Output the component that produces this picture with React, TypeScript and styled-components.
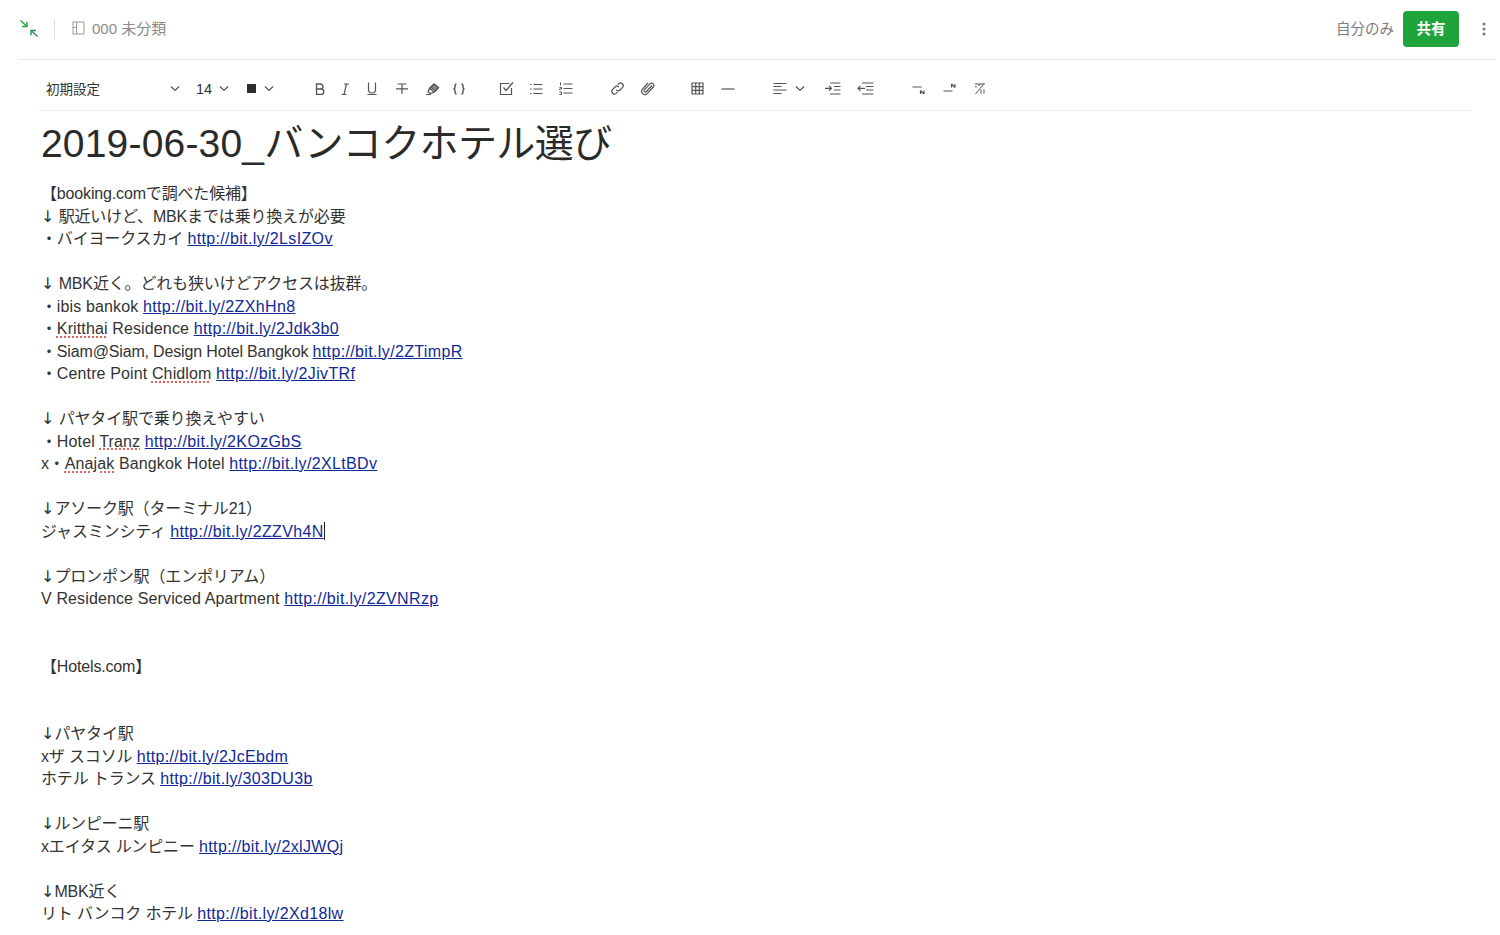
import React from "react";
import styled, { createGlobalStyle } from "styled-components";

const Global = createGlobalStyle`
  html, body { margin: 0; padding: 0; background: #fff; }
  body { font-family: "Liberation Sans", "Noto Sans CJK JP", sans-serif; color: #333; overflow: hidden; }
`;

const Page = styled.div`
  width: 1500px;
  height: 935px;
  overflow: hidden;
  display: flex;
  flex-direction: column;
  padding-left: 18px;
  padding-right: 4px;
  box-sizing: border-box;
`;

const TopBar = styled.header`
  height: 60px;
  flex: none;
  box-sizing: border-box;
  border-bottom: 1px solid #ececec;
  display: flex;
  align-items: center;
  padding: 0 10px 1px 1px;
`;

const Divider = styled.span`
  width: 1px;
  height: 19px;
  background: #dcdcdc;
  margin: 0 17px 0 15px;
`;

const NoteBook = styled.div`
  display: flex;
  align-items: center;
  gap: 7px;
  color: #8a8a8a;
  font-size: 15px;
  margin-bottom: 3px;
`;

const Spacer = styled.div`
  flex: 1;
`;

const Audience = styled.span`
  font-size: 14.5px;
  color: #7c7c7c;
  margin-right: 9px;
  margin-bottom: 3px;
`;

const ShareButton = styled.button`
  width: 56px;
  height: 36px;
  background: #1fa33b;
  color: #fff;
  border: 0;
  border-radius: 4px;
  font: bold 14.5px "Liberation Sans", "Noto Sans CJK JP", sans-serif;
  padding: 0 0 3px;
`;

const More = styled.span`
  margin-left: 23px;
  display: flex;
`;

const ToolbarWrap = styled.div`
  margin: 0 24px 0 21px;
  height: 51px;
  flex: none;
  box-sizing: border-box;
  border-bottom: 1px solid #ececec;
  padding-top: 7px;
  display: flex;
  align-items: center;
`;

const Select = styled.div<{ $w: number }>`
  width: ${(p) => p.$w}px;
  flex: none;
  display: flex;
  align-items: center;
  justify-content: space-between;
  font-size: 13.5px;
  color: #333;
`;

const StyleLabel = styled.span`
  margin-bottom: 1px;
`;

const SizeLabel = styled.span`
  font-size: 14.5px;
`;

const ColorSwatch = styled.span`
  width: 9px;
  height: 9px;
  background: #2e2e2e;
  margin-left: 1px;
`;

const Tool = styled.span<{ $w?: number }>`
  width: ${(p) => p.$w ?? 30}px;
  flex: none;
  display: flex;
  align-items: center;
  justify-content: center;
`;

const Gap = styled.span<{ $w: number }>`
  width: ${(p) => p.$w}px;
  flex: none;
`;

const Editor = styled.main`
  padding: 0 0 0 23px;
`;

const Title = styled.h1`
  margin: 10px 0 16px;
  font-weight: 400;
  font-size: 39px;
  line-height: 46px;
  color: #2a2a2a;
  white-space: nowrap;
  letter-spacing: -0.64px;
`;

const TitleLatin = styled.span`
  letter-spacing: 0.18px;
`;

const Line = styled.div`
  font-size: 16px;
  line-height: 22.5px;
  height: 22.5px;
  color: #333;
  white-space: nowrap;
  letter-spacing: -0.16px;
`;

const Latin = styled.span`
  letter-spacing: 0.13px;
`;

const Arrow = styled.span`
  font-family: "DejaVu Sans", sans-serif;
  letter-spacing: 0;
`;

const Link = styled.a`
  color: #0f2a96;
  text-decoration: underline;
  letter-spacing: 0.36px;
`;

const Misspelt = styled.span`
  text-decoration: underline dotted #e0645c 1.5px;
  text-underline-offset: 2px;
`;

const Caret = styled.span`
  display: inline-block;
  width: 1px;
  height: 18px;
  background: #222;
  vertical-align: -3px;
`;

type SvgProps = { children: React.ReactNode; w?: number; h?: number; sw?: number };
const Svg = ({ children, w = 16, h = 16, sw = 1.2 }: SvgProps) => (
  <svg width={w} height={h} viewBox={`0 0 ${w} ${h}`} fill="none" stroke="#555" strokeWidth={sw}>
    {children}
  </svg>
);

const Chevron = () => (
  <Svg w={10} h={8} sw={1.2}>
    <path d="M1 1.5 5 5.5 9 1.5" />
  </Svg>
);

const ExitIcon = () => (
  <svg width="20" height="20" viewBox="0 0 20 20" fill="none" strokeWidth="1.5">
    <path d="M1.5 1.5 8 7.5M8 2.8V7.5H3" stroke="#27a844" />
    <path d="M18.5 17.5 12 11.5M12 16.2V11.5H17" stroke="#3d8f6c" />
  </svg>
);

const NotebookIcon = () => (
  <Svg w={13} h={14} sw={1}>
    <path d="M1 1h11v12H1zM4.500 1v12M1 6.500h3.500" stroke="#999" />
  </Svg>
);

const Bold = () => (
  <Svg w={12} h={14} sw={1.3}>
    <path d="M2.500 2h4a2.500 2.500 0 0 1 0 5h-4zM2.500 7h4.600a2.700 2.700 0 0 1 0 5.400H2.500z" />
  </Svg>
);
const Italic = () => (
  <Svg w={12} h={14}>
    <path d="M5 2h5M2.500 12.500h5M7.500 2 5 12.500" />
  </Svg>
);
const Underline = () => (
  <Svg w={12} h={15}>
    <path d="M2.500 1.500v7a3.500 3.500 0 0 0 7 0v-7M1.500 13.500h9" />
  </Svg>
);
const Strike = () => (
  <Svg w={14} h={14}>
    <path d="M2.500 2h9M7 2v10M1 6.800h12" />
  </Svg>
);
const Highlight = () => (
  <Svg w={15} h={14}>
    <path d="M1 12.500h5M3 10l1.500-4L9 2l4.500 3.500-4 4.500-4 1.500zM4.500 6l4.500 4" />
    <path d="M9 2l4.500 3.500-3 3.500L6 5.500z" fill="#888" />
  </Svg>
);
const Code = () => (
  <Svg w={14} h={14} sw={1.4}>
    <path d="M4.500 2C3 2 3 3 3 4.500c0 1.500-.5 2.500-1.500 2.500C2.500 7 3 8 3 9.500S3 12 4.500 12M9.500 2C11 2 11 3 11 4.500c0 1.500.5 2.500 1.500 2.500-1 0-1.500 1-1.500 2.500S11 12 9.500 12" />
  </Svg>
);
const Check = () => (
  <Svg w={15} h={15}>
    <path d="M12.500 7v6.500h-11v-11h9" />
    <path d="M4.500 6.500 7 9.500 14 1.500" strokeWidth="1.3" />
  </Svg>
);
const Bullets = () => (
  <Svg w={14} h={12}>
    <path d="M4.500 1.500h9M4.500 6h9M4.500 10.500h9M1 1.500h1.500M1 6h1.500M1 10.500h1.500" />
  </Svg>
);
const Numbers = () => (
  <Svg w={14} h={13}>
    <path d="M4.500 2h9M4.500 6.500h9M4.500 11h9M1.500 .5v3M.5 5.500h2v1.500h-2v1M.5 10h2v2.500h-2" strokeWidth="1" />
  </Svg>
);
const LinkIcon = () => (
  <Svg w={15} h={15}>
    <path d="M6.200 9a2.700 2.700 0 0 0 3.800 0l2.600-2.600a2.700 2.700 0 0 0-3.800-3.800L7.600 3.800" />
    <path d="M8.800 6a2.700 2.700 0 0 0-3.800 0L2.400 8.600a2.700 2.700 0 0 0 3.800 3.800l1.200-1.200" />
  </Svg>
);
const Clip = () => (
  <Svg w={15} h={15}>
    <path d="M12 4.500 6.500 10.500a1.400 1.400 0 0 1-2-2L10 2.800" />
    <path d="M10 2.800a2.300 2.300 0 0 1 3.300 3.200L7.200 12.600a3.300 3.300 0 0 1-4.800-4.500L8 2" />
  </Svg>
);
const TableIcon = () => (
  <Svg w={13} h={13} sw={1.2}>
    <path d="M1 1h11v11H1zM1 4.700h11M1 8.300h11M4.700 1v11M8.300 1v11" />
  </Svg>
);
const Rule = () => (
  <Svg w={14} h={4} sw={1.2}>
    <path d="M.5 2h13" />
  </Svg>
);
const Align = () => (
  <Svg w={14} h={13} sw={1.2}>
    <path d="M.5 1.500h13M.5 4.500h8M.5 8h13M.5 11.500h8" />
  </Svg>
);
const Indent = () => (
  <Svg w={17} h={13}>
    <path d="M6 1h10.500M10 4.500h6.500M10 8h6.500M6 12h10.500M1 6.300h6.500M5 3.800l2.500 2.500L5 8.800" />
  </Svg>
);
const Outdent = () => (
  <Svg w={17} h={13}>
    <path d="M5 1h11.500M9 4.500h7.500M9 8h7.500M5 12h11.500M1 6.300h7M3.500 3.800 1 6.300l2.500 2.500" />
  </Svg>
);
const SubIcon = () => (
  <Svg w={13} h={12} sw={1.2}>
    <path d="M.5 4h9M8.500 7.500v3.500M8.500 7.500 12 11M12 7.500v3.500" />
  </Svg>
);
const SupIcon = () => (
  <Svg w={13} h={12} sw={1.2}>
    <path d="M.5 8h9M8.500 1v3.500M8.500 1 12 4.500M12 1v3.500" />
  </Svg>
);
const ClearIcon = () => (
  <Svg w={12} h={13} sw={1}>
    <path d="M1 2h9.500M5 2v2M1 4.800h2M10.500 1 1.500 12M7 7.500v4M10 7.500v4" />
  </Svg>
);
const Dots = () => (
  <svg width="4" height="14" viewBox="0 0 4 14" fill="#777">
    <circle cx="2" cy="2" r="1.500" />
    <circle cx="2" cy="7" r="1.500" />
    <circle cx="2" cy="12" r="1.500" />
  </svg>
);

export default function App() {
  return (
    <Page>
      <Global />
      <TopBar>
        <ExitIcon />
        <Divider />
        <NoteBook>
          <NotebookIcon />
          000 未分類
        </NoteBook>
        <Spacer />
        <Audience>自分のみ</Audience>
        <ShareButton>共有</ShareButton>
        <More>
          <Dots />
        </More>
      </TopBar>
      <ToolbarWrap>
        <Gap $w={7} />
        <Select $w={134}>
          <StyleLabel>初期設定</StyleLabel>
          <Chevron />
        </Select>
        <Gap $w={16} />
        <Select $w={33}>
          <SizeLabel>14</SizeLabel>
          <Chevron />
        </Select>
        <Gap $w={17} />
        <Select $w={28}>
          <ColorSwatch />
          <Chevron />
        </Select>
        <Gap $w={32} />
        <Tool $w={28}><Bold /></Tool>
        <Tool $w={22}><Italic /></Tool>
        <Tool $w={32}><Underline /></Tool>
        <Tool $w={28}><Strike /></Tool>
        <Tool $w={32}><Highlight /></Tool>
        <Tool $w={22}><Code /></Tool>
        <Gap $w={21} />
        <Tool><Check /></Tool>
        <Tool><Bullets /></Tool>
        <Tool><Numbers /></Tool>
        <Gap $w={21} />
        <Tool><LinkIcon /></Tool>
        <Tool><Clip /></Tool>
        <Gap $w={20} />
        <Tool><TableIcon /></Tool>
        <Tool $w={32}><Rule /></Tool>
        <Gap $w={25} />
        <Tool $w={22}><Align /></Tool>
        <Tool $w={18}><Chevron /></Tool>
        <Gap $w={7} />
        <Tool $w={33}><Indent /></Tool>
        <Tool $w={33}><Outdent /></Tool>
        <Gap $w={21} />
        <Tool $w={31}><SubIcon /></Tool>
        <Tool $w={31}><SupIcon /></Tool>
        <Tool><ClearIcon /></Tool>
      </ToolbarWrap>
      <Editor>
        <Title><TitleLatin>2019-06-30_</TitleLatin>バンコクホテル選び</Title>
        <Line>【booking.comで調べた候補】</Line>
        <Line><Arrow>↓</Arrow> 駅近いけど、MBKまでは乗り換えが必要</Line>
        <Line>・バイヨークスカイ <Link>http://bit.ly/2LsIZOv</Link></Line>
        <Line />
        <Line><Arrow>↓</Arrow> MBK近く。どれも狭いけどアクセスは抜群。</Line>
        <Line>・<Latin>ibis bankok </Latin><Link>http://bit.ly/2ZXhHn8</Link></Line>
        <Line>・<Latin><Misspelt>Kritthai</Misspelt> Residence </Latin><Link>http://bit.ly/2Jdk3b0</Link></Line>
        <Line>・Siam@Siam, Design Hotel Bangkok <Link>http://bit.ly/2ZTimpR</Link></Line>
        <Line>・<Latin>Centre Point <Misspelt>Chidlom</Misspelt> </Latin><Link>http://bit.ly/2JivTRf</Link></Line>
        <Line />
        <Line><Arrow>↓</Arrow> パヤタイ駅で乗り換えやすい</Line>
        <Line>・<Latin>Hotel <Misspelt>Tranz</Misspelt> </Latin><Link>http://bit.ly/2KOzGbS</Link></Line>
        <Line>x・<Latin><Misspelt>Anajak</Misspelt> Bangkok Hotel </Latin><Link>http://bit.ly/2XLtBDv</Link></Line>
        <Line />
        <Line><Arrow>↓</Arrow>アソーク駅（ターミナル21）</Line>
        <Line>ジャスミンシティ <Link>http://bit.ly/2ZZVh4N</Link><Caret /></Line>
        <Line />
        <Line><Arrow>↓</Arrow>プロンポン駅（エンポリアム）</Line>
        <Line><Latin>V Residence Serviced Apartment </Latin><Link>http://bit.ly/2ZVNRzp</Link></Line>
        <Line />
        <Line />
        <Line>【Hotels.com】</Line>
        <Line />
        <Line />
        <Line><Arrow>↓</Arrow>パヤタイ駅</Line>
        <Line>xザ スコソル <Link>http://bit.ly/2JcEbdm</Link></Line>
        <Line>ホテル トランス <Link>http://bit.ly/303DU3b</Link></Line>
        <Line />
        <Line><Arrow>↓</Arrow>ルンピーニ駅</Line>
        <Line>xエイタス ルンピニー <Link>http://bit.ly/2xlJWQj</Link></Line>
        <Line />
        <Line><Arrow>↓</Arrow>MBK近く</Line>
        <Line>リト バンコク ホテル <Link>http://bit.ly/2Xd18lw</Link></Line>
      </Editor>
    </Page>
  );
}
